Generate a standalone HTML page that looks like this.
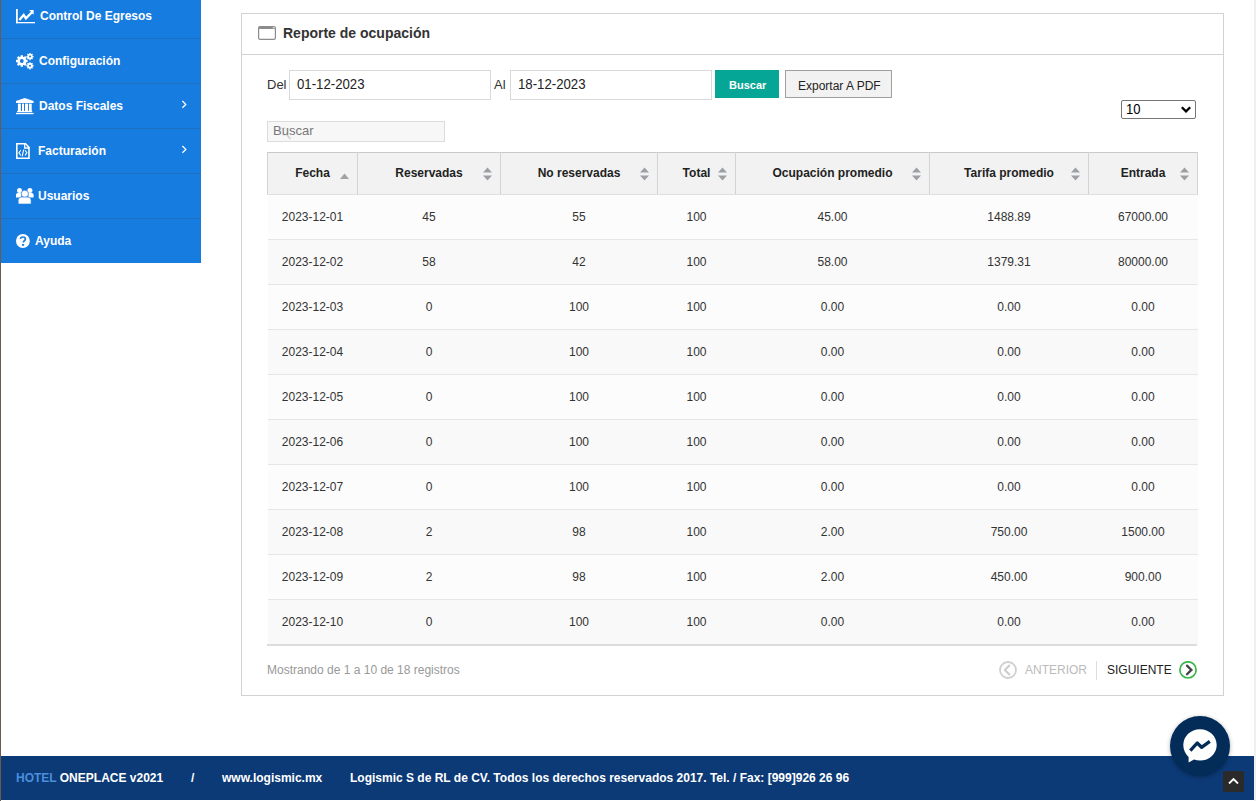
<!DOCTYPE html>
<html><head><meta charset="utf-8">
<style>
*{box-sizing:border-box;margin:0;padding:0}
html,body{width:1256px;height:801px;overflow:hidden;background:#fff;font-family:"Liberation Sans",sans-serif;position:relative}
.abs{position:absolute}
#leftline{left:0;top:0;width:1px;height:801px;background:#6a5a50}
#rightbar{left:1254px;top:0;width:2px;height:801px;background:#f0f0f0}
#side{left:1px;top:0;width:200px;height:263px;background:#177ce0}
.sep{position:absolute;left:0;width:200px;height:1px;background:#1f6fc1}
.mi{position:absolute;color:#fff;font-weight:bold;font-size:12px;line-height:14px;white-space:nowrap}
.ic{position:absolute}
.chev{position:absolute}
#panel{left:241px;top:13px;width:983px;height:683px;border:1px solid #d2d2d2;background:#fff}
#phead{left:0;top:0;width:981px;height:41px;border-bottom:1px solid #d2d2d2}
.t{position:absolute;white-space:nowrap;line-height:1}
.inp{position:absolute;border:1px solid #d9d9d9;background:#fff;height:30px}
table{border-collapse:collapse;position:absolute;left:267px;top:152px;width:930px;table-layout:fixed}
th{background:#f2f2f2;border:1px solid #d3d3d3;border-top-color:#c9c9c9;border-bottom-color:#e0e0e0;height:42px;font-size:12px;font-weight:bold;color:#222;position:relative;text-align:center;padding:0 0 2px 0}
td{height:45px;font-size:12px;color:#333;text-align:center;border-top:1px solid #e6e6e6;padding:0}
tr.o td{background:#fcfcfc}
tr.e td{background:#f9f9f9}
.sort{position:absolute;right:8px;top:14px;width:9px;height:13px;overflow:visible}
#footer{left:1px;top:756px;width:1253px;height:44px;background:#0c3a77}
</style></head><body>
<div id="leftline" class="abs"></div>
<div id="rightbar" class="abs"></div>

<div id="side" class="abs">
  <div class="sep" style="top:38px"></div>
  <div class="sep" style="top:83px"></div>
  <div class="sep" style="top:128px"></div>
  <div class="sep" style="top:173px"></div>
  <div class="sep" style="top:218px"></div>
  <div class="mi" style="left:39px;top:9px">Control De Egresos</div>
  <div class="mi" style="left:38px;top:54px">Configuración</div>
  <div class="mi" style="left:38px;top:99px">Datos Fiscales</div>
  <svg class="chev" style="left:180px;top:100px" width="6" height="9" viewBox="0 0 6 9"><path d="M1.4 1L4.8 4.4L1.4 7.8" stroke="#fff" stroke-width="1.3" fill="none"/></svg>
  <div class="mi" style="left:37px;top:144px">Facturación</div>
  <svg class="chev" style="left:180px;top:145px" width="6" height="9" viewBox="0 0 6 9"><path d="M1.4 1L4.8 4.4L1.4 7.8" stroke="#fff" stroke-width="1.3" fill="none"/></svg>
  <div class="mi" style="left:37px;top:189px">Usuarios</div>
  <div class="mi" style="left:34px;top:234px">Ayuda</div>
</div>

<!-- sidebar icons, absolute page coords -->
<svg class="abs" style="left:13px;top:6px" width="24" height="22" viewBox="0 0 24 22"><g fill="#fff"><rect x="3" y="3" width="1.8" height="14.2"/><rect x="3" y="16" width="19" height="1.3"/><path d="M16.2 4.1H20.6V8.8Z"/></g><path d="M6.3 14L10.7 9L12.9 12.4L19 6.3" stroke="#fff" stroke-width="2.3" fill="none" stroke-linejoin="miter"/></svg>
<svg class="abs" style="left:13px;top:50px" width="24" height="22" viewBox="0 0 24 22"><g fill="#fff"><circle cx="8.8" cy="11" r="4.4"/><circle cx="17" cy="6.6" r="2.7"/><circle cx="17" cy="15.8" r="2.7"/></g><g stroke="#fff" stroke-width="2.4"><path d="M8.8 5.2V16.8M3 11H14.6M4.7 6.9L12.9 15.1M12.9 6.9L4.7 15.1"/></g><g stroke="#fff" stroke-width="1.4"><path d="M17 3V10.2M13.4 6.6H20.6M14.5 4.1L19.5 9.1M19.5 4.1L14.5 9.1M17 12.2V19.4M13.4 15.8H20.6M14.5 13.3L19.5 18.3M19.5 13.3L14.5 18.3"/></g><g fill="#177ce0"><circle cx="8.8" cy="11" r="1.9"/><circle cx="17" cy="6.6" r="1"/><circle cx="17" cy="15.8" r="1"/></g></svg>
<svg class="abs" style="left:13px;top:95px" width="24" height="22" viewBox="0 0 24 22"><g fill="#fff"><path d="M3 6L11.7 3L20.6 6V8H3Z"/><rect x="4.9" y="8.6" width="3" height="7.4"/><rect x="9" y="8.6" width="2" height="7.4"/><rect x="12" y="8.6" width="3" height="7.4"/><rect x="15.9" y="8.6" width="2.8" height="7.4"/><rect x="4.1" y="15.9" width="15.1" height="1.3"/><rect x="3" y="17.9" width="17.6" height="1.3"/></g></svg>
<svg class="abs" style="left:13px;top:140px" width="24" height="22" viewBox="0 0 24 22"><path d="M3.8 3.8H12.5L16 7.3V18.2H3.8Z" stroke="#fff" stroke-width="1.6" fill="none"/><path d="M11.7 3.8V8H16" stroke="#fff" stroke-width="1.3" fill="none"/><path d="M7.8 10.2L5.9 12.8L7.8 15.4M12 10.2L13.9 12.8L12 15.4M10.7 9.5L9.2 16.3" stroke="#fff" stroke-width="1.1" fill="none"/></svg>
<svg class="abs" style="left:13px;top:185px" width="24" height="22" viewBox="0 0 24 22"><g fill="#fff"><circle cx="6.5" cy="5.4" r="2.5"/><circle cx="16.9" cy="5.4" r="2.5"/><path d="M3 12.4V10C3 8.8 3.8 8 5 8H8.2V12.4Z"/><path d="M20.6 12.4V10C20.6 8.8 19.8 8 18.6 8H15.4V12.4Z"/></g><circle cx="11.8" cy="8.8" r="3.6" fill="#fff" stroke="#177ce0" stroke-width="0.6"/><path d="M5.2 19V15.5C5.2 13.3 6.6 12.1 8.4 12.1H15C16.8 12.1 18.1 13.3 18.1 15.5V19Z" fill="#fff" stroke="#177ce0" stroke-width="0.6"/></svg>
<svg class="abs" style="left:13px;top:230px" width="24" height="22" viewBox="0 0 24 22"><circle cx="9.9" cy="11" r="6.9" fill="#fff"/><path d="M7.4 8.9C7.5 7.6 8.5 7 9.9 7C11.3 7 12.4 7.8 12.4 9C12.4 10.6 10.3 10.7 10.3 12.6" stroke="#177ce0" stroke-width="1.7" fill="none"/><rect x="9" y="14" width="2.1" height="1.8" fill="#177ce0"/></svg>

<div id="panel" class="abs">
  <div id="phead" class="abs">
    <svg class="abs" style="left:16px;top:12px" width="18" height="14" viewBox="0 0 18 14"><rect x="0.6" y="0.6" width="16.8" height="12.8" rx="1.6" fill="none" stroke="#8c8c8c" stroke-width="1.2"/><rect x="0.6" y="0.6" width="16.8" height="2.4" rx="1" fill="#8c8c8c"/><rect x="14.8" y="1.2" width="2" height="1" fill="#f4f4f4"/></svg>
    <div class="t" style="left:41px;top:12px;font-size:14px;font-weight:bold;color:#333">Reporte de ocupación</div>
  </div>
</div>

<div class="t" style="left:267px;top:78px;font-size:13px;color:#333">Del</div>
<div class="inp" style="left:289px;top:70px;width:202px"></div>
<div class="t" style="left:297px;top:77px;font-size:14px;color:#222;transform:scaleX(0.943);transform-origin:0 0">01-12-2023</div>
<div class="t" style="left:494px;top:78px;font-size:13px;color:#333">Al</div>
<div class="inp" style="left:510px;top:70px;width:202px"></div>
<div class="t" style="left:518px;top:77px;font-size:14px;color:#222;transform:scaleX(0.943);transform-origin:0 0">18-12-2023</div>
<div class="abs" style="left:715px;top:70px;width:64px;height:28px;background:#06a696"></div>
<div class="t" style="left:729px;top:80px;font-size:11px;font-weight:bold;color:#fff">Buscar</div>
<div class="abs" style="left:785px;top:70px;width:107px;height:28px;background:#f2f2f2;border:1px solid #a0a0a0"></div>
<div class="t" style="left:798px;top:80px;font-size:12px;color:#222">Exportar A PDF</div>

<div class="abs" style="left:1121px;top:100px;width:75px;height:19px;border:1px solid #767676;border-radius:2px;background:#fff"></div>
<div class="t" style="left:1126px;top:102px;font-size:14px;color:#000;transform:scaleX(0.93);transform-origin:0 0">10</div>
<svg class="abs" style="left:1181px;top:106px" width="10" height="7" viewBox="0 0 10 7"><path d="M0.8 1.2L5 5.4L9.2 1.2" stroke="#000" stroke-width="2.3" fill="none"/></svg>

<div class="abs" style="left:267px;top:121px;width:178px;height:21px;background:#f7f7f7;border:1px solid #dcdcdc"></div>
<svg class="abs" style="left:278px;top:126px" width="16" height="16" viewBox="0 0 16 16"><circle cx="5.7" cy="5.5" r="3.6" fill="none" stroke="#e4e4e4" stroke-width="1.2"/><path d="M8.5 8.5L12.5 13" stroke="#cfcfcf" stroke-width="1.6"/></svg>
<div class="t" style="left:273px;top:124px;font-size:13px;color:#777">Buscar</div>

<table>
<colgroup><col style="width:90px"><col style="width:143px"><col style="width:157px"><col style="width:78px"><col style="width:194px"><col style="width:159px"><col style="width:109px"></colgroup>
<thead><tr>
<th>Fecha<svg class="sort" style="top:19.5px;height:7px" viewBox="0 0 9 7"><path d="M0 6H9L4.5 0.5Z" fill="#a3a3a3"/></svg></th>
<th>Reservadas<svg class="sort" viewBox="0 0 9 13"><path d="M0 5.4H9L4.5 0.4Z M0 8.6H9L4.5 13.6Z" fill="#9c9fa3"/></svg></th>
<th>No reservadas<svg class="sort" viewBox="0 0 9 13"><path d="M0 5.4H9L4.5 0.4Z M0 8.6H9L4.5 13.6Z" fill="#9c9fa3"/></svg></th>
<th>Total<svg class="sort" viewBox="0 0 9 13"><path d="M0 5.4H9L4.5 0.4Z M0 8.6H9L4.5 13.6Z" fill="#9c9fa3"/></svg></th>
<th>Ocupación promedio<svg class="sort" viewBox="0 0 9 13"><path d="M0 5.4H9L4.5 0.4Z M0 8.6H9L4.5 13.6Z" fill="#9c9fa3"/></svg></th>
<th>Tarifa promedio<svg class="sort" viewBox="0 0 9 13"><path d="M0 5.4H9L4.5 0.4Z M0 8.6H9L4.5 13.6Z" fill="#9c9fa3"/></svg></th>
<th>Entrada<svg class="sort" viewBox="0 0 9 13"><path d="M0 5.4H9L4.5 0.4Z M0 8.6H9L4.5 13.6Z" fill="#9c9fa3"/></svg></th>
</tr></thead>
<tbody>
<tr class="o"><td>2023-12-01</td><td>45</td><td>55</td><td>100</td><td>45.00</td><td>1488.89</td><td>67000.00</td></tr>
<tr class="e"><td>2023-12-02</td><td>58</td><td>42</td><td>100</td><td>58.00</td><td>1379.31</td><td>80000.00</td></tr>
<tr class="o"><td>2023-12-03</td><td>0</td><td>100</td><td>100</td><td>0.00</td><td>0.00</td><td>0.00</td></tr>
<tr class="e"><td>2023-12-04</td><td>0</td><td>100</td><td>100</td><td>0.00</td><td>0.00</td><td>0.00</td></tr>
<tr class="o"><td>2023-12-05</td><td>0</td><td>100</td><td>100</td><td>0.00</td><td>0.00</td><td>0.00</td></tr>
<tr class="e"><td>2023-12-06</td><td>0</td><td>100</td><td>100</td><td>0.00</td><td>0.00</td><td>0.00</td></tr>
<tr class="o"><td>2023-12-07</td><td>0</td><td>100</td><td>100</td><td>0.00</td><td>0.00</td><td>0.00</td></tr>
<tr class="e"><td>2023-12-08</td><td>2</td><td>98</td><td>100</td><td>2.00</td><td>750.00</td><td>1500.00</td></tr>
<tr class="o"><td>2023-12-09</td><td>2</td><td>98</td><td>100</td><td>2.00</td><td>450.00</td><td>900.00</td></tr>
<tr class="e"><td>2023-12-10</td><td>0</td><td>100</td><td>100</td><td>0.00</td><td>0.00</td><td>0.00</td></tr>
</tbody>
</table>
<div class="abs" style="left:267px;top:644px;width:930px;height:2px;background:#dcdcdc"></div>

<div class="t" style="left:267px;top:664px;font-size:12px;color:#999">Mostrando de 1 a 10 de 18 registros</div>
<svg class="abs" style="left:999px;top:661px" width="18" height="18" viewBox="0 0 18 18"><circle cx="9" cy="9" r="8" stroke="#cfcfcf" stroke-width="1.8" fill="none"/><path d="M10.3 4.6L5.9 9L10.3 13.4" stroke="#cdcdcd" stroke-width="2.1" fill="none" stroke-linecap="round"/></svg>
<div class="t" style="left:1025px;top:664px;font-size:12px;color:#bbb">ANTERIOR</div>
<div class="abs" style="left:1096px;top:661px;width:1px;height:19px;background:#ddd"></div>
<div class="t" style="left:1107px;top:664px;font-size:12px;color:#222">SIGUIENTE</div>
<svg class="abs" style="left:1179px;top:661px" width="18" height="18" viewBox="0 0 18 18"><circle cx="9" cy="8.9" r="8.1" stroke="#3cb64b" stroke-width="1.7" fill="none"/><path d="M8 4.6L12.4 8.9L8 13.2" stroke="#444" stroke-width="2.3" fill="none" stroke-linecap="round"/></svg>

<div id="footer" class="abs">
  <div class="t" style="left:15px;top:16px;font-size:12px;font-weight:bold;color:#fff"><span style="color:#4a8fdc">HOTEL</span> ONEPLACE v2021</div>
  <div class="t" style="left:190px;top:16px;font-size:12px;font-weight:bold;color:#fff">/</div>
  <div class="t" style="left:221px;top:16px;font-size:12px;font-weight:bold;color:#fff">www.logismic.mx</div>
  <div class="t" style="left:349px;top:16px;font-size:12px;font-weight:bold;color:#fff">Logismic S de RL de CV. Todos los derechos reservados 2017. Tel. / Fax: [999]926 26 96</div>
</div>

<div class="abs" style="left:1170px;top:716px;width:60px;height:60px;border-radius:50%;background:#032c58;box-shadow:0 1px 4px rgba(0,0,0,0.3)"></div>
<svg class="abs" style="left:1182px;top:728px" width="36" height="36" viewBox="0 0 36 36"><path d="M18 1.2C8.7 1.2 1.3 8.1 1.3 17.1C1.3 21.8 3.3 26 6.6 28.9V34.6L12 31.6C13.9 32.2 15.9 32.5 18 32.5C27.3 32.5 34.7 25.6 34.7 16.9C34.7 8.1 27.3 1.2 18 1.2Z" fill="#fff"/><path d="M8.3 22.6L15.2 15L19.6 19.3L27.8 13.4" stroke="#032c58" stroke-width="3.3" fill="none" stroke-linejoin="round"/></svg>
<div class="abs" style="left:1223px;top:771px;width:21px;height:21px;background:#2a2a2a;border-radius:2px"></div>
<svg class="abs" style="left:1228px;top:777px" width="11" height="8" viewBox="0 0 11 8"><path d="M1 6.5L5.5 2L10 6.5" stroke="#fff" stroke-width="1.8" fill="none"/></svg>
</body></html>
